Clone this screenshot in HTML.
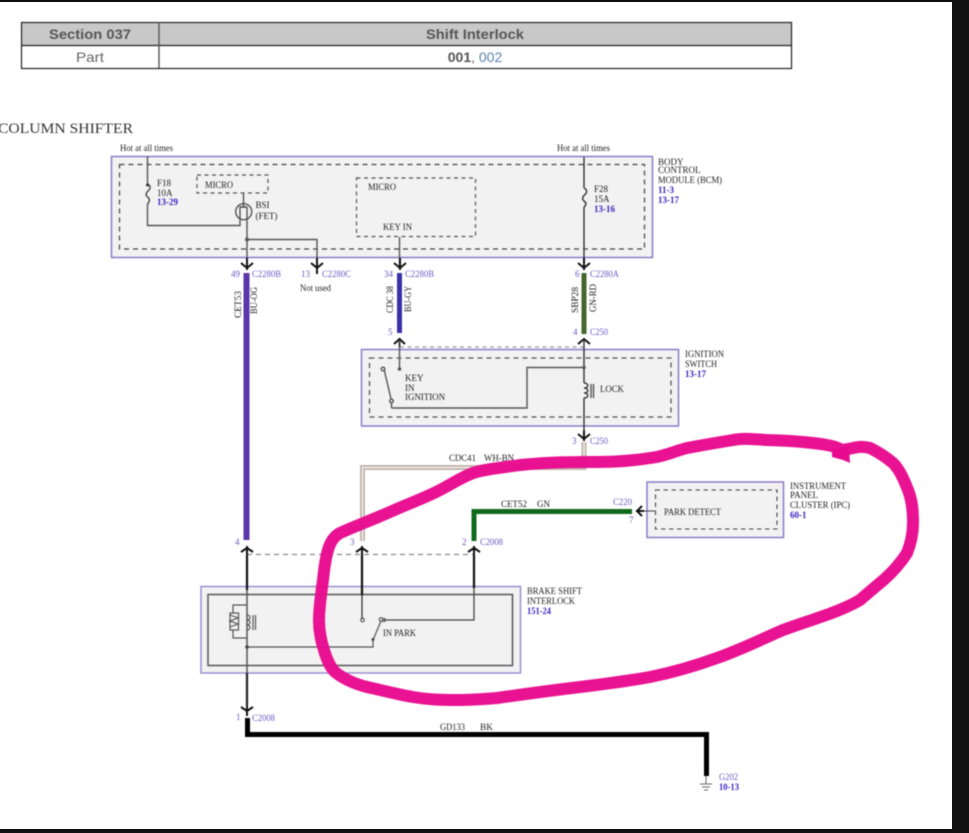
<!DOCTYPE html>
<html>
<head>
<meta charset="utf-8">
<style>
html,body{margin:0;padding:0;background:#fff;width:969px;height:833px;overflow:hidden}
svg{display:block;position:absolute;left:0;top:0}
.t{font-family:"Liberation Serif",serif;font-size:9px;fill:#222}
.p{font-family:"Liberation Serif",serif;font-size:9px;fill:#6a58c4}
.b{font-family:"Liberation Serif",serif;font-size:9px;font-weight:bold;fill:#3a22c0}
.s{font-family:"Liberation Sans",sans-serif;font-size:14px;text-anchor:middle}
</style>
</head>
<body>
<svg width="969" height="833" viewBox="0 0 969 833" xmlns="http://www.w3.org/2000/svg">
<g style="filter:blur(0.5px)">
<!-- table -->
<rect x="21.5" y="22.5" width="770" height="23" fill="#c8c8c8"/>
<g fill="none" stroke="#222" stroke-width="1.2">
<rect x="21.5" y="22.5" width="770" height="46"/>
<path d="M21.5 45.5H791.5"/>
</g>
<path d="M159 22V68" stroke="#555" stroke-width="1.4"/>
<text class="s" x="90" y="39" fill="#555" style="font-weight:bold" textLength="82" lengthAdjust="spacingAndGlyphs">Section 037</text>
<text class="s" x="475" y="39" fill="#555" style="font-weight:bold" textLength="98" lengthAdjust="spacingAndGlyphs">Shift Interlock</text>
<text class="s" x="90" y="62" fill="#666" textLength="28" lengthAdjust="spacingAndGlyphs">Part</text>
<text class="s" x="475" y="62" fill="#666"><tspan font-weight="bold" fill="#555">001</tspan>, <tspan fill="#5b84ad">002</tspan></text>

<text x="-2" y="133" style="font-family:'Liberation Serif',serif;font-size:14.5px;fill:#333" textLength="135" lengthAdjust="spacingAndGlyphs">COLUMN SHIFTER</text>

<!-- BCM -->
<rect x="111.5" y="156.5" width="541" height="101" fill="#f2f2f2" stroke="#8a7cc8" stroke-width="1.5"/>
<rect x="119.5" y="164.5" width="525" height="84.5" fill="none" stroke="#444" stroke-width="1.2" stroke-dasharray="5 4"/>
<rect x="197" y="175" width="71" height="18" fill="none" stroke="#555" stroke-width="1.2" stroke-dasharray="4 3.5"/>
<rect x="356.5" y="178" width="119" height="58.5" fill="none" stroke="#555" stroke-width="1.2" stroke-dasharray="4 3.5"/>

<!-- ignition -->
<path d="M400 347H584" stroke="#999" stroke-width="1.2" stroke-dasharray="4 3.5" fill="none"/>
<rect x="361.5" y="349.5" width="317" height="76.5" fill="#f2f2f2" stroke="#8a7cc8" stroke-width="1.5"/>
<rect x="369.5" y="358" width="301.5" height="59" fill="none" stroke="#555" stroke-width="1.3" stroke-dasharray="5 4"/>

<!-- park -->
<rect x="647" y="482" width="136.5" height="55.5" fill="#f2f2f2" stroke="#8a7cc8" stroke-width="1.5"/>
<rect x="655.5" y="490" width="121.5" height="39" fill="none" stroke="#444" stroke-width="1.1" stroke-dasharray="4.5 3.5"/>

<!-- brake -->
<rect x="201" y="586.5" width="319.5" height="86.5" fill="#f2f2f2" stroke="#9a8ed2" stroke-width="1.5"/>
<rect x="208" y="594.5" width="304.5" height="71" fill="none" stroke="#555" stroke-width="1.5"/>

<!-- dashed connector row -->
<path d="M247 554.5H474" stroke="#888" stroke-width="1.2" stroke-dasharray="5 4" fill="none"/>

<!-- BCM wires -->
<g fill="none" stroke="#555" stroke-width="1.4">
<path d="M147.5 156V184M147.5 204V225.5H240V207H247M247 207V268"/>
<path d="M147.5 184c3 1.5 3.5 4 1 6.5c-3 2.500 -3 5 -1 6.5c2.5 1.5 2.5 4 0 7" stroke="#444"/>
<circle cx="243.7" cy="211.7" r="8"/>
<path d="M243.5 193V207M240 207H247"/>
<path d="M247 239.5H317V265"/>
<path d="M399.5 237V268"/>
<path d="M584 157V188M584 207V270" stroke="#333"/>
<path d="M584 188c3 1.5 3.5 4 1 6.5c-3 2.5 -3 5 -1 6.5c2.5 1.5 2.5 4 0 6" stroke="#333"/>
</g>
<circle cx="247" cy="239.5" r="2" fill="#555"/>
<circle cx="147.5" cy="185" r="1.5" fill="#333"/>

<!-- vertical wires -->
<path d="M246.5 273V540" stroke="#5a36a8" stroke-width="6"/>
<path d="M399.5 273V333" stroke="#3b2fa8" stroke-width="5"/>
<path d="M584 273V334" stroke="#44672c" stroke-width="5"/>

<!-- arrows -->
<g fill="none" stroke="#111" stroke-width="2">
<path d="M241 263L247 268L253 263M247 258V270"/>
<path d="M311 263L317 268L323 263M317 258V274"/>
<path d="M394 263L400 268L406 263M400 258V270"/>
<path d="M578 263L584 268L590 263M584 258V270"/>
<path d="M394 344L399.5 339L405 344M399.5 338V347"/>
<path d="M578 344L584 339L590 344"/>
<path d="M578 434L584 439L590 434M584 430V441"/>
<path d="M241 552L247 548L253 552M247 546V556"/>
<path d="M356 552L362 548L368 552M362 546V556"/>
<path d="M468 552L474 548L480 552M474 546V556"/>
<path d="M241 707L247 711L253 707M247 702V716"/>
<path d="M642 506L637 511L642 516M636 511H644"/>
</g>

<!-- ignition internals -->
<g fill="none" stroke="#555" stroke-width="1.4">
<path d="M399.5 340V369"/>
<path d="M391.5 408V401L384 369"/>
<path d="M391.5 408H527V367.5H584"/>
<path d="M584 340V383M584 398V432" stroke="#333"/>
<path d="M584 383c5 0 5 5 0 5c5 0 5 5 0 5c5 0 5 5 0 5" stroke="#333"/>
<path d="M591 384V398M593.5 384V398"/>
<circle cx="383" cy="369" r="1.8" fill="#eee"/>
<circle cx="391.5" cy="401" r="1.8" fill="#eee"/>
</g>
<circle cx="399.5" cy="369" r="1.8" fill="#555"/>
<circle cx="584" cy="367.5" r="1.8" fill="#555"/>

<!-- beige wire -->
<path d="M584 442V467.5H362.5V541" fill="none" stroke="#c4b6ae" stroke-width="5"/>
<path d="M584 442V467.5H362.5V541" fill="none" stroke="#fff" stroke-width="1"/>

<!-- green -->
<path d="M474 541V511.5H632" fill="none" stroke="#0f6a1c" stroke-width="5"/>
<path d="M644 511H656" stroke="#444" stroke-width="1"/>

<!-- brake wires -->
<path d="M247 556V590" stroke="#111" stroke-width="2.2"/>
<path d="M247 590V673" stroke="#555" stroke-width="1.5"/>
<path d="M247 673V705" stroke="#222" stroke-width="2.2"/>
<path d="M362 556V595" stroke="#111" stroke-width="2.2"/>
<path d="M362 595V618" stroke="#333" stroke-width="1.3"/>
<path d="M474 556V588" stroke="#111" stroke-width="2.2"/>
<path d="M474 588V620H384" fill="none" stroke="#444" stroke-width="1.3"/>
<circle cx="362.5" cy="620" r="1.8" fill="#f2f2f2" stroke="#333"/>
<g fill="none" stroke="#555" stroke-width="1.2">
<path d="M247 605H233V613M233 630V638H247"/>
<rect x="230" y="613" width="8.5" height="17"/>
<path d="M230 615L238 618L230 621L238 624L230 627"/>
<path d="M247 615c4 0 4 5 0 5c4 0 4 5 0 5c4 0 4 5 0 5"/>
<path d="M253 615V630M255.5 615V630"/>
<path d="M247 647H373V640L381 621"/>
<circle cx="381" cy="619.5" r="1.8"/>
<circle cx="384" cy="620" r="1.5"/>
</g>
<circle cx="247" cy="647" r="1.8" fill="#444"/>
<circle cx="373" cy="639.5" r="1.5" fill="#444"/>

<!-- black ground wire -->
<path d="M247.5 718V734.5H706.5V776" fill="none" stroke="#000" stroke-width="5"/>
<path d="M706 776V784M700 784H712M702 787H710M704 790H708" stroke="#666" stroke-width="1" fill="none"/>

<!-- labels -->
<text class="t" x="120" y="151" textLength="53" lengthAdjust="spacingAndGlyphs">Hot at all times</text>
<text class="t" x="557" y="151" textLength="53" lengthAdjust="spacingAndGlyphs">Hot at all times</text>
<text class="t" x="157" y="186">F18</text>
<text class="t" x="157" y="196">10A</text>
<text class="b" x="157" y="205">13-29</text>
<text class="t" x="205" y="188" textLength="28" lengthAdjust="spacingAndGlyphs">MICRO</text>
<text class="t" x="255.5" y="208">BSI</text>
<text class="t" x="255.5" y="219">(FET)</text>
<text class="t" x="368" y="190" textLength="28" lengthAdjust="spacingAndGlyphs">MICRO</text>
<text class="t" x="383" y="230" textLength="29" lengthAdjust="spacingAndGlyphs">KEY IN</text>
<text class="t" x="594" y="192">F28</text>
<text class="t" x="594" y="202">15A</text>
<text class="b" x="594" y="212">13-16</text>
<text class="t" x="658" y="165">BODY</text>
<text class="t" x="658" y="173">CONTROL</text>
<text class="t" x="658" y="183" textLength="64" lengthAdjust="spacingAndGlyphs">MODULE (BCM)</text>
<text class="b" x="658" y="193">11-3</text>
<text class="b" x="658" y="203">13-17</text>

<text class="p" x="231" y="277">49</text>
<text class="p" x="252" y="277" textLength="29" lengthAdjust="spacingAndGlyphs">C2280B</text>
<text class="p" x="301" y="277">13</text>
<text class="p" x="322" y="277" textLength="29" lengthAdjust="spacingAndGlyphs">C2280C</text>
<text class="t" x="300" y="291" textLength="31" lengthAdjust="spacingAndGlyphs">Not used</text>
<text class="p" x="384" y="277">34</text>
<text class="p" x="405" y="277" textLength="29" lengthAdjust="spacingAndGlyphs">C2280B</text>
<text class="p" x="575" y="277">6</text>
<text class="p" x="590" y="277" textLength="29" lengthAdjust="spacingAndGlyphs">C2280A</text>

<text class="t" transform="translate(241,318) rotate(-90)" textLength="27" lengthAdjust="spacingAndGlyphs">CET53</text>
<text class="t" transform="translate(257,314) rotate(-90)" textLength="27" lengthAdjust="spacingAndGlyphs">BU-OG</text>
<text class="t" transform="translate(393,313) rotate(-90)" textLength="27" lengthAdjust="spacingAndGlyphs">CDC 38</text>
<text class="t" transform="translate(411,312) rotate(-90)" textLength="26" lengthAdjust="spacingAndGlyphs">BU-GY</text>
<text class="t" transform="translate(578,313) rotate(-90)" textLength="26" lengthAdjust="spacingAndGlyphs">SBP28</text>
<text class="t" transform="translate(596,312) rotate(-90)" textLength="28" lengthAdjust="spacingAndGlyphs">GN-RD</text>

<text class="p" x="388" y="335">5</text>
<text class="p" x="573" y="335">4</text>
<text class="p" x="590" y="335" textLength="18" lengthAdjust="spacingAndGlyphs">C250</text>

<text class="t" x="405" y="381">KEY</text>
<text class="t" x="405" y="391">IN</text>
<text class="t" x="405" y="400" textLength="40" lengthAdjust="spacingAndGlyphs">IGNITION</text>
<text class="t" x="600" y="392" textLength="24" lengthAdjust="spacingAndGlyphs">LOCK</text>
<text class="t" x="685" y="357" textLength="39" lengthAdjust="spacingAndGlyphs">IGNITION</text>
<text class="t" x="685" y="367" textLength="32" lengthAdjust="spacingAndGlyphs">SWITCH</text>
<text class="b" x="685" y="377">13-17</text>

<text class="p" x="572" y="444">3</text>
<text class="p" x="590" y="444" textLength="18" lengthAdjust="spacingAndGlyphs">C250</text>
<text class="t" x="449" y="461" textLength="27" lengthAdjust="spacingAndGlyphs">CDC41</text>
<text class="t" x="484" y="461" textLength="30" lengthAdjust="spacingAndGlyphs">WH-BN</text>
<text class="t" x="501" y="507" textLength="26" lengthAdjust="spacingAndGlyphs">CET52</text>
<text class="t" x="537" y="507" textLength="13" lengthAdjust="spacingAndGlyphs">GN</text>
<text class="p" x="613" y="505" textLength="19" lengthAdjust="spacingAndGlyphs">C220</text>
<text class="p" x="629" y="523">7</text>
<text class="t" x="664" y="515" textLength="57" lengthAdjust="spacingAndGlyphs">PARK DETECT</text>
<text class="t" x="790" y="489" textLength="56" lengthAdjust="spacingAndGlyphs">INSTRUMENT</text>
<text class="t" x="790" y="498">PANEL</text>
<text class="t" x="790" y="508" textLength="60" lengthAdjust="spacingAndGlyphs">CLUSTER (IPC)</text>
<text class="b" x="790" y="518">60-1</text>

<text class="p" x="235" y="545">4</text>
<text class="p" x="350" y="545">3</text>
<text class="p" x="462" y="545">2</text>
<text class="p" x="480" y="545" textLength="23" lengthAdjust="spacingAndGlyphs">C2008</text>

<text class="t" x="527" y="594" textLength="55" lengthAdjust="spacingAndGlyphs">BRAKE SHIFT</text>
<text class="t" x="527" y="604" textLength="48" lengthAdjust="spacingAndGlyphs">INTERLOCK</text>
<text class="b" x="527" y="614" textLength="24" lengthAdjust="spacingAndGlyphs">151-24</text>
<text class="t" x="383" y="636" textLength="33" lengthAdjust="spacingAndGlyphs">IN PARK</text>

<text class="p" x="236" y="720">1</text>
<text class="p" x="252" y="721" textLength="23" lengthAdjust="spacingAndGlyphs">C2008</text>
<text class="t" x="440" y="730" textLength="25" lengthAdjust="spacingAndGlyphs">GD133</text>
<text class="t" x="480" y="730" textLength="13" lengthAdjust="spacingAndGlyphs">BK</text>
<text class="p" x="719" y="780" textLength="19" lengthAdjust="spacingAndGlyphs">G202</text>
<text class="b" x="719" y="790" textLength="20" lengthAdjust="spacingAndGlyphs">10-13</text>

<!-- magenta marker -->
<path d="M840 449C832 444 800 441 767 440C750 439 742 438 733 440C715 443 703 445 687 448C672 452 662 457 650 458C625 462 605 462 587 462C560 462 540 463 520 465C500 468 485 469 473 473C460 478 450 485 440 490C425 498 405 505 390 512C372 520 355 526 340 533C333 537 330 543 328 550C325 560 324 570 323 580C321 595 319 608 319 620C319 632 321 641 324 650C327 660 330 667 335 672C345 680 355 684 367 687C385 691 400 695 413 697C430 700 445 700 457 700C472 700 485 699 497 698C525 694 555 690 580 687C605 684 628 681 650 677C675 672 695 666 717 658C740 650 760 640 783 630C810 620 840 612 860 600C868 593 874 588 880 583C892 573 900 564 907 553C911 543 913 533 913 523C913 510 912 500 908 490C904 480 900 470 893 463C886 457 878 452 870 448C862 446 858 447 853 448C848 449 844 450 840 450" fill="none" stroke="#e80a8e" stroke-width="12" stroke-linecap="round" stroke-linejoin="round" opacity="0.97"/>
<path d="M832 449L849 447L850 463L843 460L832 457Z" fill="#e80a8e"/>
</g>

<!-- frame -->
<rect x="0" y="0" width="969" height="2" fill="#0c0c0c"/>
<rect x="952" y="0" width="17" height="833" fill="#111"/>
<rect x="0" y="829" width="969" height="4" fill="#111"/>
</svg>
</body>
</html>
